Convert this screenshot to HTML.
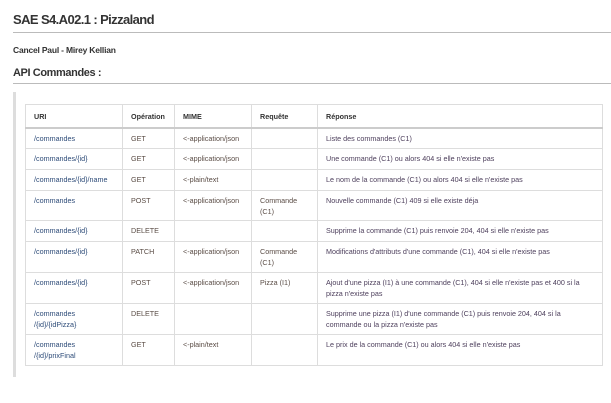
<!DOCTYPE html>
<html><head><meta charset="utf-8"><style>
*{margin:0;padding:0;box-sizing:border-box}
body{width:611px;height:403px;background:#fff;font-family:"Liberation Sans",sans-serif;position:relative;overflow:hidden;color:#333}
.h1{position:absolute;left:13px;top:12px;font-size:13px;font-weight:bold;color:#333;letter-spacing:-0.6px}
.hr1{position:absolute;left:13px;right:0;top:32px;border-top:1px solid #bbb}
.au{position:absolute;left:13px;top:45px;font-size:8.5px;font-weight:bold;color:#333;letter-spacing:-0.2px}
.h2{position:absolute;left:13px;top:67px;font-size:11px;font-weight:bold;color:#333;letter-spacing:-0.4px}
.hr2{position:absolute;left:13px;right:0;top:83px;border-top:1px solid #bbb}
.bq{position:absolute;left:13px;top:92px;width:3px;height:285px;background:#ddd}
table{position:absolute;left:25px;top:104px;border-collapse:collapse;font-size:7.2px}
td,th{border:1px solid #ddd;padding:4px 8px 0 8px;vertical-align:top;line-height:11px;text-align:left;color:#5a4c45}
th{font-weight:bold;color:#333;height:23px;padding-top:6px;border-bottom:2px solid #ccc}
td.u{color:#2d4b78}
td.r{color:#4d3f5c}
</style></head><body>
<div class="h1">SAE S4.A02.1 : Pizzaland</div>
<div class="hr1"></div>
<div class="au">Cancel Paul - Mirey Kellian</div>
<div class="h2">API Commandes :</div>
<div class="hr2"></div>
<div class="bq"></div>
<table>
<colgroup><col style="width:97px"><col style="width:52px"><col style="width:77px"><col style="width:66px"><col style="width:285px"></colgroup>
<tr><th>URI</th><th>Opération</th><th>MIME</th><th>Requête</th><th>Réponse</th></tr>
<tr style="height:21px"><td class="u">/commandes</td><td>GET</td><td>&lt;-application/json</td><td></td><td class="r">Liste des commandes (C1)</td></tr>
<tr style="height:21px"><td class="u">/commandes/{id}</td><td>GET</td><td>&lt;-application/json</td><td></td><td class="r">Une commande (C1) ou alors 404 si elle n'existe pas</td></tr>
<tr style="height:21px"><td class="u">/commandes/{id}/name</td><td>GET</td><td>&lt;-plain/text</td><td></td><td class="r">Le nom de la commande (C1) ou alors 404 si elle n'existe pas</td></tr>
<tr style="height:30px"><td class="u">/commandes</td><td>POST</td><td>&lt;-application/json</td><td>Commande<br>(C1)</td><td class="r">Nouvelle commande (C1) 409 si elle existe déja</td></tr>
<tr style="height:21px"><td class="u">/commandes/{id}</td><td>DELETE</td><td></td><td></td><td class="r">Supprime la commande (C1) puis renvoie 204, 404 si elle n'existe pas</td></tr>
<tr style="height:31px"><td class="u">/commandes/{id}</td><td>PATCH</td><td>&lt;-application/json</td><td>Commande<br>(C1)</td><td class="r">Modifications d'attributs d'une commande (C1), 404 si elle n'existe pas</td></tr>
<tr style="height:31px"><td class="u">/commandes/{id}</td><td>POST</td><td>&lt;-application/json</td><td>Pizza (I1)</td><td class="r">Ajout d'une pizza (I1) à une commande (C1), 404 si elle n'existe pas et 400 si la<br>pizza n'existe pas</td></tr>
<tr style="height:31px"><td class="u">/commandes<br>/{id}/{idPizza}</td><td>DELETE</td><td></td><td></td><td class="r">Supprime une pizza (I1) d'une commande (C1) puis renvoie 204, 404 si la<br>commande ou la pizza n'existe pas</td></tr>
<tr style="height:31px"><td class="u">/commandes<br>/{id}/prixFinal</td><td>GET</td><td>&lt;-plain/text</td><td></td><td class="r">Le prix de la commande (C1) ou alors 404 si elle n'existe pas</td></tr>
</table>
</body></html>
